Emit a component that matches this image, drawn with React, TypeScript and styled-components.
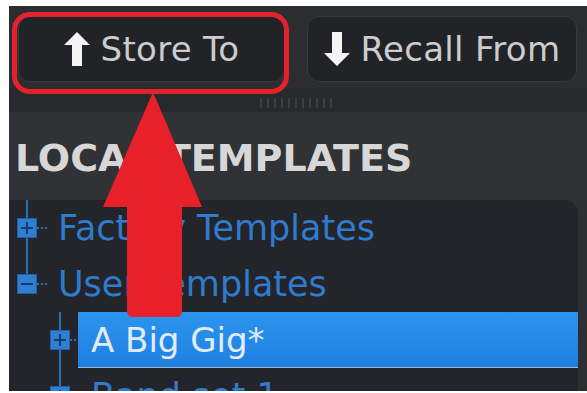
import React from 'react';
import styled, {createGlobalStyle} from 'styled-components';

const GlobalStyle = createGlobalStyle`
  html, body {
    margin: 0;
    padding: 0;
    background: #ffffff;
  }
  body {
    font-family: "DejaVu Sans", "Liberation Sans", sans-serif;
  }
`;

const Frame = styled.div`
  padding: 6px 0 2px 9px;
`;

const Window = styled.div`
  position: relative;
  width: 578px;
  height: 385px;
  display: flex;
  flex-direction: column;
  overflow: hidden;
  background: #2e2f33;
`;

const Toolbar = styled.div`
  display: flex;
  gap: 22px;
  height: 82px;
  padding: 10px 0 0 9px;
  box-sizing: border-box;
  background: #2c2d31;
`;

const ButtonSlot = styled.div`
  position: relative;
`;

const ToolButton = styled.div<{$width: number}>`
  display: flex;
  align-items: center;
  justify-content: center;
  gap: 11px;
  width: ${p => p.$width}px;
  height: 66px;
  box-sizing: border-box;
  border-radius: 12px;
  border: 1px solid #38393d;
  background: #222327;
  color: #cbccce;
  font-size: 34px;
  letter-spacing: 0.3px;
`;

const Highlight = styled.div`
  position: absolute;
  left: -6px;
  top: -4px;
  right: -4px;
  bottom: -6px;
  border: 5px solid #e3222b;
  border-radius: 18px;
  pointer-events: none;
`;

const GripBand = styled.div`
  display: flex;
  align-items: center;
  justify-content: center;
  height: 24px;
  background: #28292c;
`;

const Grip = styled.div`
  width: 76px;
  height: 10px;
  margin-top: 6px;
  background: repeating-linear-gradient(
    to right,
    #45464a 0,
    #45464a 2px,
    transparent 2px,
    transparent 7px
  );
  opacity: 0.7;
`;

const SectionHeader = styled.div`
  display: flex;
  align-items: center;
  height: 88px;
  padding: 4px 0 0 6px;
  box-sizing: border-box;
  background: #313236;
  color: #d7d7d8;
  font-size: 38px;
  font-weight: bold;
`;

const TreePanel = styled.div`
  flex: 1;
  margin-right: 9px;
  background: #23252a;
  border-top-right-radius: 14px;
  overflow: hidden;
`;

const TreeRow = styled.div<{$depth: number}>`
  display: flex;
  align-items: center;
  height: 56px;
  padding-left: ${p => 8 + p.$depth * 33}px;
`;

const Gutter = styled.div<{$up: boolean; $down: boolean}>`
  position: relative;
  display: flex;
  align-items: center;
  width: 20px;
  height: 100%;
  flex-shrink: 0;

  &::before {
    content: '';
    position: absolute;
    left: 9px;
    width: 2px;
    top: ${p => (p.$up ? '0' : '50%')};
    bottom: ${p => (p.$down ? '0' : '50%')};
    background: #2c6fb8;
  }
`;

const Expander = styled.div`
  position: relative;
  z-index: 1;
  width: 20px;
  height: 20px;
  box-sizing: border-box;
  background: #2f80d4;
  border: 1px solid #1f5fa8;
`;

const Connector = styled.div<{$width: number}>`
  width: ${p => p.$width}px;
  height: 2px;
  flex-shrink: 0;
  background: repeating-linear-gradient(to right, #2c6fb8 0, #2c6fb8 2px, transparent 2px, transparent 4px);
`;

const Label = styled.div`
  margin-left: 11px;
  color: #2f7bcd;
  font-size: 35px;
  white-space: nowrap;
`;

const SelectedLabel = styled.div`
  flex: 1;
  display: flex;
  align-items: center;
  height: 55px;
  padding-left: 13px;
  background: linear-gradient(to bottom, #2b95ee, #1f7fe2);
  border-bottom: 1px solid #9ab4cc;
  color: #e2ecf7;
  font-size: 34px;
  white-space: nowrap;
`;

const Callout = styled.svg`
  position: absolute;
  left: 94px;
  top: 86px;
  pointer-events: none;
`;

const ArrowGlyph: React.FC<{down?: boolean}> = ({down}) => (
  <svg width="26" height="34" viewBox="0 0 26 34" style={down ? {transform: 'rotate(180deg)'} : undefined}>
    <path d="M13 0 L26 13 L18 13 L18 34 L8 34 L8 13 L0 13 Z" fill="#f4f4f4" />
  </svg>
);

const ExpanderIcon: React.FC<{open?: boolean}> = ({open}) => (
  <Expander>
    <svg width="18" height="18" viewBox="0 0 18 18">
      <rect x="3" y="8" width="12" height="2" fill="#123a6e" />
      {!open && <rect x="8" y="3" width="2" height="12" fill="#123a6e" />}
    </svg>
  </Expander>
);

type Node = {
  label: string;
  depth: number;
  open?: boolean;
  up: boolean;
  down: boolean;
  selected?: boolean;
};

const nodes: Node[] = [
  {label: 'Factory Templates', depth: 0, up: true, down: true},
  {label: 'User Templates', depth: 0, open: true, up: true, down: false},
  {label: 'A Big Gig*', depth: 1, up: true, down: true, selected: true},
  {label: 'Band set 1', depth: 1, up: true, down: true},
];

const App: React.FC = () => {
  return (
    <Frame>
      <GlobalStyle />
      <Window>
        <Toolbar>
          <ButtonSlot>
            <ToolButton $width={267}>
              <ArrowGlyph />
              Store To
            </ToolButton>
            <Highlight />
          </ButtonSlot>
          <ButtonSlot>
            <ToolButton $width={270}>
              <ArrowGlyph down />
              Recall From
            </ToolButton>
          </ButtonSlot>
        </Toolbar>
        <GripBand>
          <Grip />
        </GripBand>
        <SectionHeader>LOCAL TEMPLATES</SectionHeader>
        <TreePanel>
          {nodes.map(n => (
            <TreeRow key={n.label} $depth={n.depth}>
              <Gutter $up={n.up} $down={n.down}>
                <ExpanderIcon open={n.open} />
              </Gutter>
              {n.selected ? (
                <>
                  <Connector $width={8} />
                  <SelectedLabel>{n.label}</SelectedLabel>
                </>
              ) : (
                <>
                  <Connector $width={10} />
                  <Label>{n.label}</Label>
                </>
              )}
            </TreeRow>
          ))}
        </TreePanel>
        <Callout width="100" height="226" viewBox="0 0 100 226">
          <path
            d="M50 0 L99 115 L79 115 L79 219 Q79 225 73 225 L30 225 Q24 225 24 219 L24 115 L0 115 Z"
            fill="#e8202a"
          />
        </Callout>
      </Window>
    </Frame>
  );
};

export default App;
